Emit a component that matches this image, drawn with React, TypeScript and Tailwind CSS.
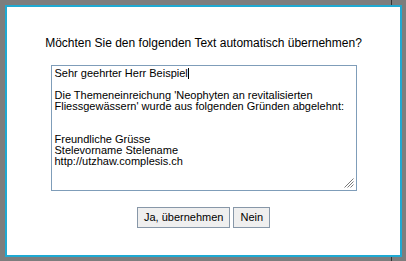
import React from 'react';

const lines = [
  'Sehr geehrter Herr Beispiel',
  '',
  "Die Themeneinreichung 'Neophyten an revitalisierten",
  "Fliessgewässern' wurde aus folgenden Gründen abgelehnt:",
  '',
  '',
  'Freundliche Grüsse',
  'Stelevorname Stelename',
  'http://utzhaw.complesis.ch',
];

export default function App() {
  return (
    <div
      className="relative w-[406px] h-[261px] bg-[#7d7d7d] pl-[5px] pt-[5px] overflow-hidden"
      style={{ fontFamily: '"Liberation Sans", Arial, sans-serif' }}
    >
      {/* window edge behind the dialog */}
      <div className="absolute left-[391px] top-0 w-px h-full bg-[#333]" />

      <div className="relative w-[397px] h-[252px] bg-white border-2 border-[#1fa9d2] flex flex-col items-center">
        <p className="mt-[29px] text-[12px] leading-[14px] text-black">
          Möchten Sie den folgenden Text automatisch übernehmen?
        </p>

        {/* Text area */}
        <div className="relative mt-[15px] w-[306px] h-[126px] border border-[#7f9db9] pl-[3px] pt-[2px] text-[11px] leading-[11px] text-black">
          {lines.map((line, i) => (
            <div key={i} className="h-[11px] whitespace-pre">
              {line}
              {i === 0 && <span className="inline-block w-px h-[11px] bg-black align-top" />}
            </div>
          ))}
          <svg className="absolute right-[2px] bottom-[2px]" width="11" height="11" viewBox="0 0 11 11">
            <path d="M10.5 1.5L1.5 10.5M10.5 4.5L4.5 10.5M10.5 7.5L7.5 10.5" stroke="#7a7a7a" strokeWidth="1" fill="none" />
          </svg>
        </div>

        {/* Buttons */}
        <div className="mt-[16px] flex gap-[3px]">
          <button className="h-[21px] px-[6px] bg-[#efefef] border border-[#8797a8] text-[11px] text-black">
            Ja, übernehmen
          </button>
          <button className="h-[21px] px-[6px] bg-[#efefef] border border-[#8797a8] text-[11px] text-black">
            Nein
          </button>
        </div>
      </div>
    </div>
  );
}
